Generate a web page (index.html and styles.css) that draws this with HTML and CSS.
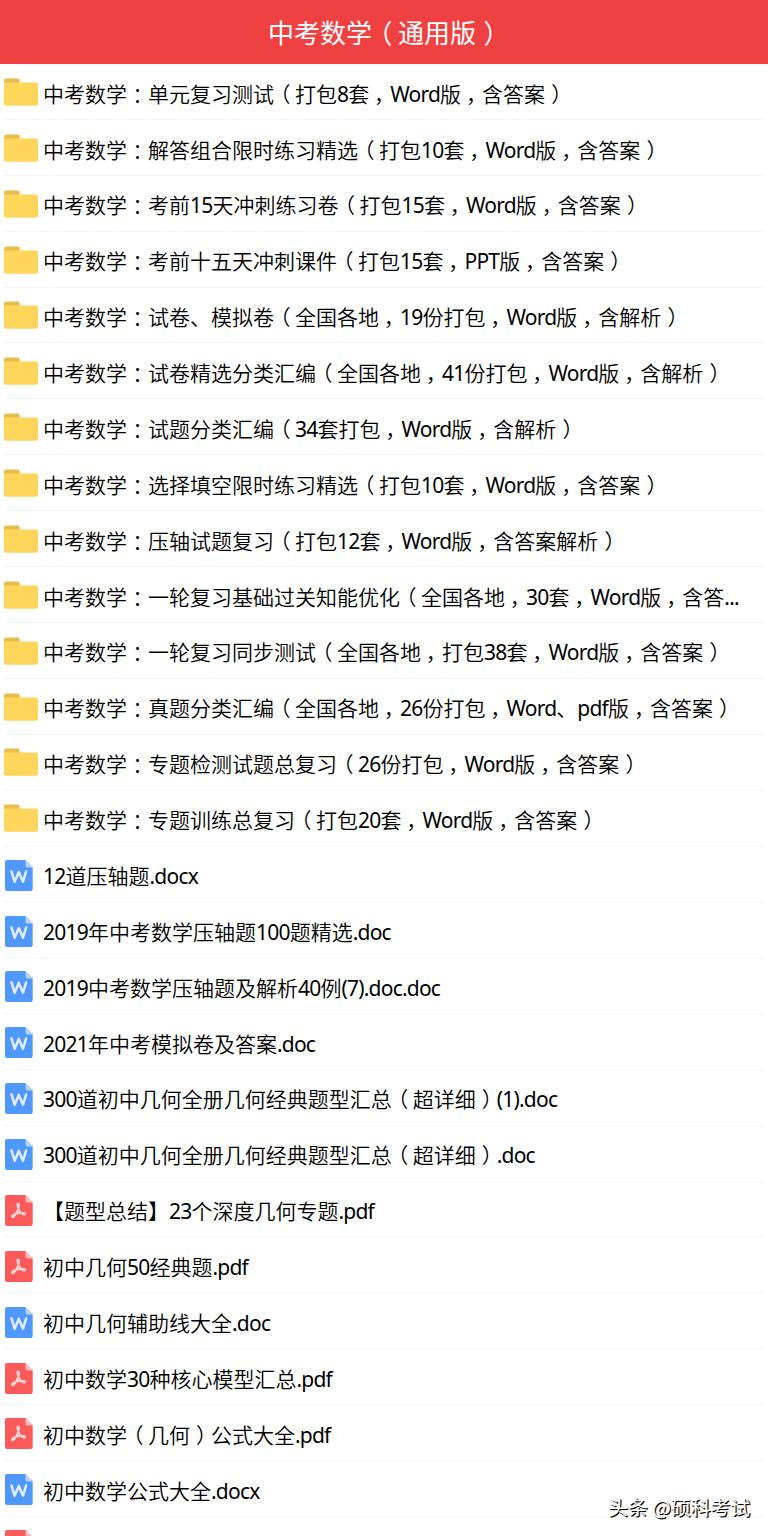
FILE: index.html
```html
<!DOCTYPE html>
<html lang="zh-CN">
<head>
<meta charset="utf-8">
<title>中考数学（通用版）</title>
<link rel="stylesheet" href="styles.css">
</head>
<body>
<svg class="defs" width="0" height="0" aria-hidden="true">
  <symbol id="folder" viewBox="0 0 34 28">
    <path fill="#ecbd4d" d="M0 9V2.2Q0 .5 1.700 .5H14Q15.500 .5 15.700 2V9Z"/>
    <path fill="#ffd55b" d="M0 4.500H32.300Q34 4.500 34 6.200V26Q34 27.700 32.300 27.700H1.700Q0 27.700 0 26Z"/>
  </symbol>
  <symbol id="word" viewBox="0 0 28 31">
    <path fill="#4f98ff" d="M2 0H20.500L27.700 7.500V29Q27.700 31 25.700 31H2Q0 31 0 29V2Q0 0 2 0Z"/>
    <path fill="#b8d5ff" d="M20.500 0L27.700 7.500H22.500Q20.500 7.500 20.500 5.500Z"/>
    <path fill="none" stroke="#e3eeff" stroke-width="2.500" stroke-linejoin="round" stroke-linecap="round" d="M6.500 11.500L9.600 21.700L13.800 12L18 21.700L21.100 11.500"/>
  </symbol>
  <symbol id="pdf" viewBox="0 0 28 31">
    <path fill="#ff5a5a" d="M2 0H20.500L27.700 7.500V29Q27.700 31 25.700 31H2Q0 31 0 29V2Q0 0 2 0Z"/>
    <path fill="#ffbcbc" d="M20.500 0L27.700 7.500H22.500Q20.500 7.500 20.500 5.500Z"/>
    <path fill="none" stroke="#ffdada" stroke-width="1.800" stroke-linejoin="round" stroke-linecap="round" d="M12.600 8.600Q14.300 8.300 14 11.200Q13.200 16.500 8.700 21.800Q7 23 7 21.400Q8 19 14.500 18Q20 17.300 20.200 19Q19.500 20.600 16.200 18.200Q13 15.200 12.400 10.500Q12.100 9 12.600 8.600Z"/>
  </symbol>
</svg>
<header class="title" data-text="中考数学（通用版）"></header>
<ul class="files"></ul>
<div class="watermark">头条 @硕科考试</div>
<script src="list.js"></script>
</body>
</html>
```
FILE: styles.css
```css
html, body {
  margin: 0;
  height: 1536px;
  overflow: hidden;
}
body {
  background: #fff;
  color: #000;
  font-family: "Noto Sans CJK SC", sans-serif;
}
.defs { position: absolute; }
.title {
  height: 64px;
  line-height: 63px;
  background: #f04142;
  color: #fff;
  font-size: 26px;
  text-align: center;
  text-indent: 2px;
  white-space: nowrap;
}
.files {
  list-style: none;
  margin: 0;
  padding: 0 4px;
}
.row {
  display: flex;
  align-items: center;
  box-sizing: border-box;
  height: 55.88px;
  border-bottom: 1px solid #f0f5fc;
}
.icon {
  flex: none;
  display: block;
  width: 34px;
  height: 28px;
  margin: 1px 5px 0 0;
}
.icon-file {
  width: 28px;
  height: 31px;
  margin: 3px 10px 0 1px;
}
.name {
  font-size: 21px;
  line-height: 30px;
  padding-top: 3.4px;
  white-space: nowrap;
  font-weight: 350;
}
.latin {
  font-family: "Noto Sans", sans-serif;
  font-weight: 400;
  letter-spacing: -0.037em;
}
.comma, .colon, .paren { font-feature-settings: "halt"; }
.comma { padding: 0 .27em 0 .23em; }
.colon { padding: 0 .25em; }
.paren { padding: 0 .21em 0 .29em; }
.watermark {
  position: absolute;
  right: 18px;
  bottom: 13px;
  color: #fff;
  font-size: 19.8px;
  line-height: 32px;
  white-space: nowrap;
  text-shadow: 1px 1px 1px #000, 1px 1px 0 #222;
}
```
FILE: list.js
```js
const folders = [
  '单元复习测试（打包8套，Word版，含答案）',
  '解答组合限时练习精选（打包10套，Word版，含答案）',
  '考前15天冲刺练习卷（打包15套，Word版，含答案）',
  '考前十五天冲刺课件（打包15套，PPT版，含答案）',
  '试卷、模拟卷（全国各地，19份打包，Word版，含解析）',
  '试卷精选分类汇编（全国各地，41份打包，Word版，含解析）',
  '试题分类汇编（34套打包，Word版，含解析）',
  '选择填空限时练习精选（打包10套，Word版，含答案）',
  '压轴试题复习（打包12套，Word版，含答案解析）',
  '一轮复习基础过关知能优化（全国各地，30套，Word版，含答...',
  '一轮复习同步测试（全国各地，打包38套，Word版，含答案）',
  '真题分类汇编（全国各地，26份打包，Word、pdf版，含答案）',
  '专题检测试题总复习（26份打包，Word版，含答案）',
  '专题训练总复习（打包20套，Word版，含答案）'
];
const documents = [
  '12道压轴题.docx',
  '2019年中考数学压轴题100题精选.doc',
  '2019中考数学压轴题及解析40例(7).doc.doc',
  '2021年中考模拟卷及答案.doc',
  '300道初中几何全册几何经典题型汇总（超详细）(1).doc',
  '300道初中几何全册几何经典题型汇总（超详细）.doc',
  '【题型总结】23个深度几何专题.pdf',
  '初中几何50经典题.pdf',
  '初中几何辅助线大全.doc',
  '初中数学30种核心模型汇总.pdf',
  '初中数学（几何）公式大全.pdf',
  '初中数学公式大全.docx',
  '.pdf'
];

// Centre full-width punctuation and tighten Latin runs.
const typeset = text => text
  .replace(/[\x21-\x7e]+/g, '<span class=latin>$&</span>')
  .replace(/，/g, '<span class=comma>，</span>')
  .replace(/：/g, '<span class=colon>：</span>')
  .replace(/[（）]/g, '<span class=paren>$&</span>');

const row = (icon, text) => `<li class="row">
  <svg class="icon ${icon === 'folder' ? '' : 'icon-file'}"><use href="#${icon}"/></svg>
  <span class="name">${typeset(text)}</span></li>`;

document.querySelector('.files').innerHTML =
  folders.map(t => row('folder', '中考数学：' + t)).join('') +
  documents.map(t => row(t.endsWith('pdf') ? 'pdf' : 'word', t === '.pdf' ? '' : t)).join('');
const title = document.querySelector('.title');
title.innerHTML = typeset(title.dataset.text);
```
